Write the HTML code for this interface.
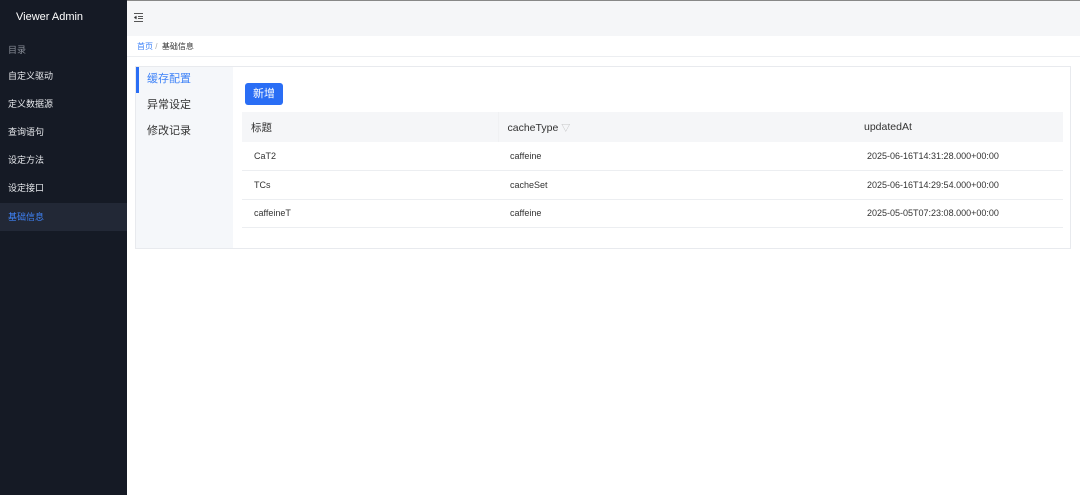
<!DOCTYPE html>
<html><head><meta charset="utf-8"><style>
*{margin:0;padding:0;box-sizing:border-box}
body{width:1080px;height:495px;overflow:hidden;font-family:"Liberation Sans","Noto Sans CJK SC",sans-serif;background:#fff;position:relative}
.sb{position:absolute;left:0;top:0;width:127px;height:495px;background:#151a25;color:#e6e8ec}
.sb .logo{position:absolute;left:16px;top:11px;font-size:11px;color:#fff}
.sb .it{position:absolute;left:8px;font-size:9px;height:28px;line-height:28px;width:119px}
.main{position:absolute;left:127px;top:0;right:0;height:495px;border-top:1px solid #888}
.hd{height:35px;background:#f5f6f8}
.bc{height:21px;border-bottom:1px solid #eceef1;font-size:8px;line-height:22px;padding-left:10px;color:#333}
.card{position:absolute;left:8px;top:65px;width:936px;height:183px;border:1px solid #e8eaee}
.tabs{position:absolute;left:0;top:0;width:97px;height:181px;background:#f5f7fa}
.tab{position:absolute;left:11px;font-size:11px;color:#333}
.btn{position:absolute;left:109px;top:16px;width:38px;height:22px;background:#2a6ef5;border-radius:3px;color:#fff;font-size:11px;line-height:22px;text-align:center}
table{position:absolute;left:106px;top:45px;width:821px;border-collapse:collapse;font-size:9px;color:#333}
th{background:#f5f6f8;height:30px;text-align:left;font-weight:normal;font-size:10.5px;padding-left:9px;color:#333}
td{height:28.5px;border-bottom:1px solid #eceef1;padding-left:12px}
</style></head><body>
<div class="sb">
<div class="logo">Viewer Admin</div>
<div class="it" style="top:36px;color:#8a8f99">目录</div>
<div class="it" style="top:62px">自定义驱动</div>
<div class="it" style="top:90px">定义数据源</div>
<div class="it" style="top:118px">查询语句</div>
<div class="it" style="top:146px">设定方法</div>
<div class="it" style="top:174px">设定接口</div>
<div class="it" style="top:203px;left:0;padding-left:8px;width:127px;background:#222836;color:#3f83f8">基础信息</div>
</div>
<div class="main">
<div class="hd"><svg style="position:absolute;left:7px;top:12px" width="9" height="9" viewBox="0 0 9 9" stroke="#555" stroke-width="1"><path d="M0 .5h9M4 3.5h5M4 5.5h5M0 8.5h9M2.5 3L.5 4.5 2.5 6"/></svg></div>
<div class="bc"><span style="color:#3f83f8">首页</span> <span style="color:#aaa">/</span>&nbsp; 基础信息</div>
<div class="card">
<div class="tabs">
<div style="position:absolute;left:0;top:0;width:3px;height:26px;background:#2a6ef5"></div>
<div class="tab" style="top:3px;color:#3f83f8">缓存配置</div>
<div class="tab" style="top:29px">异常设定</div>
<div class="tab" style="top:55px">修改记录</div>
</div>
<div class="btn">新增</div>
<table>
<tr><th style="width:256px">标题</th><th style="width:357px;border-left:1px solid #f0f1f3">cacheType <span style="color:#bbb;font-size:9px">▽</span></th><th>updatedAt</th></tr>
<tr><td>CaT2</td><td>caffeine</td><td>2025-06-16T14:31:28.000+00:00</td></tr>
<tr><td>TCs</td><td>cacheSet</td><td>2025-06-16T14:29:54.000+00:00</td></tr>
<tr><td>caffeineT</td><td>caffeine</td><td>2025-05-05T07:23:08.000+00:00</td></tr>
</table>
</div>
</div>
</body></html>
